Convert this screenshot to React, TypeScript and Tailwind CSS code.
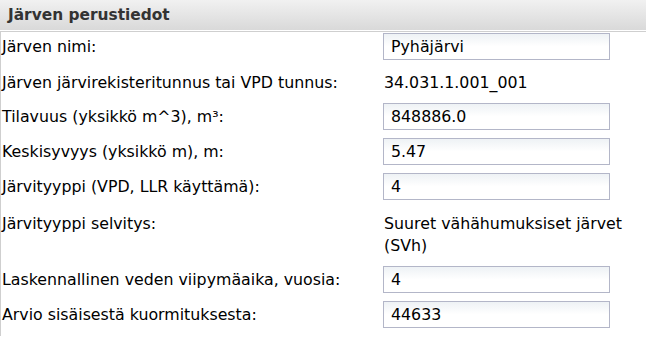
import React from "react";

const font = { fontFamily: '"DejaVu Sans", "Liberation Sans", sans-serif' } as React.CSSProperties;

function Input({ value }: { value: string }) {
  return (
    <div className="h-[27px] w-[227px] border border-[#b3b6c8] bg-gradient-to-b from-[#eef2f5] via-white to-white pl-[7px] text-[15.8px] leading-[25px] text-black">
      {value}
    </div>
  );
}

function InputRow({ label, value }: { label: string; value: string }) {
  return (
    <div className="flex h-[35px] items-start">
      <div className="w-[382px] pl-[1px] text-[15.8px] leading-[27px] text-black">{label}</div>
      <Input value={value} />
    </div>
  );
}

export default function App() {
  return (
    <div className="h-[345px] w-[647px] bg-white" style={font}>
      <div className="h-[30px] w-[646px] bg-gradient-to-b from-[#f1f1f1] to-[#d9d9d9] pl-[8px] text-[15.4px] font-bold leading-[30px] text-[#333]">
        Järven perustiedot
      </div>
      <div className="h-[1px] w-[646px] bg-white" />
      <div className="h-[1px] w-[646px] bg-[#cfcfcf]" />
      <div className="border-l border-[#cfcfcf] pt-[1px]">
        <InputRow label="Järven nimi:" value="Pyhäjärvi" />
        <div className="flex h-[35px] items-start pt-[4px] text-[15.8px] leading-[22px] text-black">
          <div className="w-[382px] pl-[1px]">Järven järvirekisteritunnus tai VPD tunnus:</div>
          <div className="pl-[1px]">34.031.1.001_001</div>
        </div>
        <InputRow label="Tilavuus (yksikkö m^3), m³:" value="848886.0" />
        <InputRow label="Keskisyvyys (yksikkö m), m:" value="5.47" />
        <InputRow label="Järvityyppi (VPD, LLR käyttämä):" value="4" />
        <div className="flex h-[58px] items-start pt-[5px] text-[15.8px] leading-[22px] text-black">
          <div className="w-[382px] pl-[1px]">Järvityyppi selvitys:</div>
          <div className="w-[262px] pl-[1px]">Suuret vähähumuksiset järvet (SVh)</div>
        </div>
        <InputRow label="Laskennallinen veden viipymäaika, vuosia:" value="4" />
        <InputRow label="Arvio sisäisestä kuormituksesta:" value="44633" />
      </div>
    </div>
  );
}
